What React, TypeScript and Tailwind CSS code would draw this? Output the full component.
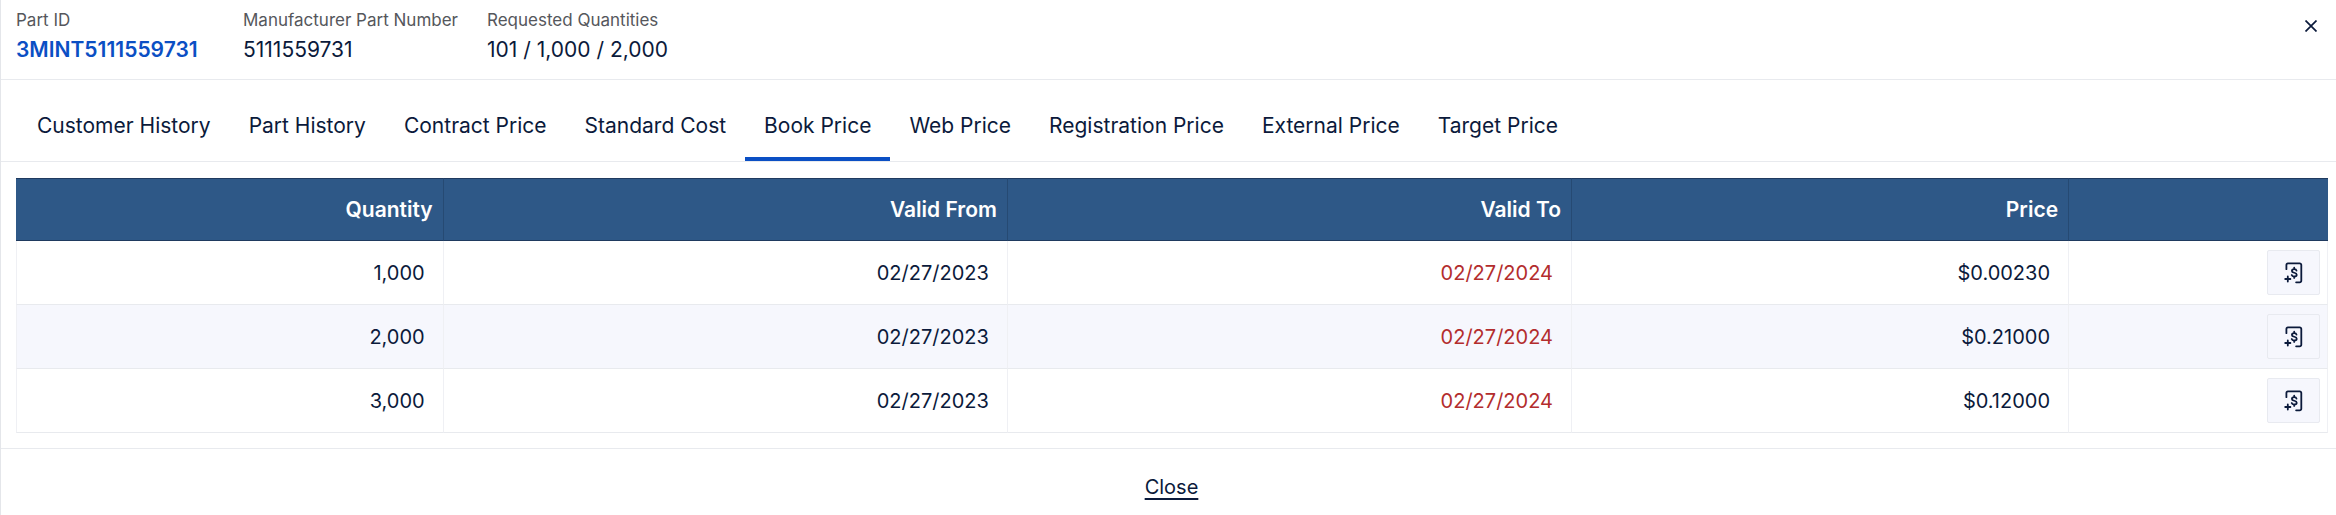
import React, { useState } from 'react';

interface PriceBreak {
  quantity: string;
  validFrom: string;
  validTo: string;
  price: string;
}

const tabs = [
  'Customer History',
  'Part History',
  'Contract Price',
  'Standard Cost',
  'Book Price',
  'Web Price',
  'Registration Price',
  'External Price',
  'Target Price',
];

const priceBreaks: PriceBreak[] = [
  { quantity: '1,000', validFrom: '02/27/2023', validTo: '02/27/2024', price: '$0.00230' },
  { quantity: '2,000', validFrom: '02/27/2023', validTo: '02/27/2024', price: '$0.21000' },
  { quantity: '3,000', validFrom: '02/27/2023', validTo: '02/27/2024', price: '$0.12000' },
];

const CloseIcon = () => (
  <svg className="h-3 w-3" viewBox="0 0 12 12" fill="none" stroke="currentColor" strokeWidth="1.7" aria-hidden="true">
    <path d="M0.5 0.5 11.5 11.5M11.5 0.5 0.5 11.5" />
  </svg>
);

const AddPriceIcon = () => (
  <svg
    className="h-6 w-6"
    viewBox="0 0 24 24"
    fill="none"
    stroke="currentColor"
    strokeWidth="1.8"
    strokeLinecap="round"
    strokeLinejoin="round"
    aria-hidden="true"
  >
    <path d="M4.4 8.2V4a1.6 1.6 0 0 1 1.6-1.6h11.7A1.6 1.6 0 0 1 19.3 4v15.7a1.6 1.6 0 0 1-1.6 1.6h-3.6" />
    <path d="M3.2 18h5.2M5.8 15.4v5.2" />
    <path d="M14.5 9.6c-.2-.9-1.1-1.4-2.2-1.4-1.4 0-2.4.7-2.4 1.7 0 2.5 4.8 1.2 4.8 3.8 0 1.1-1 1.8-2.4 1.8-1.3 0-2.3-.5-2.6-1.5M12.2 8V6.7M12.2 16.9v-1.3" />
  </svg>
);

interface FieldProps {
  label: string;
  children: React.ReactNode;
}

const Field: React.FC<FieldProps> = ({ label, children }) => (
  <div>
    <dt className="text-[17px] leading-6 text-[#55575c]">{label}</dt>
    <dd className="mt-1 text-[21px] leading-7">{children}</dd>
  </div>
);

const headCell = 'border-r border-[#264a73] pr-[10px] text-right text-[21px] font-semibold last:border-r-0';
const bodyCell = 'border-r border-[#eff0f4] pr-[18px] text-right';

export default function App() {
  const [activeTab, setActiveTab] = useState('Book Price');

  return (
    <div className="border-l border-[#e4e6ea] bg-white font-['Inter','Liberation_Sans',sans-serif] text-[#0b1a3b]">
      <header className="flex items-start justify-between border-b border-[#e8eaee] pt-2 pr-[19px] pb-[15px] pl-[15px]">
        <dl className="grid grid-cols-[198px_auto_auto] gap-x-[29px]">
          <Field label="Part ID">
            <a href="#part" className="font-semibold text-[#0b4fc4]">
              3MINT5111559731
            </a>
          </Field>
          <Field label="Manufacturer Part Number">5111559731</Field>
          <Field label="Requested Quantities">101 / 1,000 / 2,000</Field>
        </dl>
        <button type="button" aria-label="Close panel" className="mt-3">
          <CloseIcon />
        </button>
      </header>

      <nav role="tablist" className="flex border-b border-[#e8eaee] pt-[14px] pl-[17px]">
        {tabs.map((tab) => (
          <button
            key={tab}
            type="button"
            role="tab"
            aria-selected={tab === activeTab}
            onClick={() => setActiveTab(tab)}
            className={`h-[67px] border-b-4 px-[19px] text-[21px] leading-7 ${
              tab === activeTab ? 'border-[#0b4fc4]' : 'border-transparent'
            }`}
          >
            {tab}
          </button>
        ))}
      </nav>

      <main className="pt-4 pr-2 pb-[15px] pl-[15px]">
        <table className="w-full table-fixed border-separate border-spacing-0 text-[20px] leading-7">
          <colgroup>
            <col className="w-[18.5%]" />
            <col className="w-[24.4%]" />
            <col className="w-[24.4%]" />
            <col className="w-[21.5%]" />
            <col />
          </colgroup>
          <thead>
            <tr className="h-[63px] bg-[#2e5887] text-white [&>th]:border-y [&>th]:border-y-[#1f3a5f]">
              <th scope="col" className={headCell}>Quantity</th>
              <th scope="col" className={headCell}>Valid From</th>
              <th scope="col" className={headCell}>Valid To</th>
              <th scope="col" className={headCell}>Price</th>
              <th scope="col" className={headCell} aria-label="Actions" />
            </tr>
          </thead>
          <tbody>
            {priceBreaks.map((row) => (
              <tr
                key={row.quantity}
                className="h-16 even:bg-[#f6f7fd] [&>td]:border-b [&>td]:border-b-[#e8eaee] [&>td:first-child]:border-l [&>td:first-child]:border-l-[#eff0f4]"
              >
                <td className={bodyCell}>{row.quantity}</td>
                <td className={bodyCell}>{row.validFrom}</td>
                <td className={`${bodyCell} text-[#b32d2d]`}>{row.validTo}</td>
                <td className={bodyCell}>{row.price}</td>
                <td className="border-r border-[#eff0f4] pr-[7px]">
                  <button
                    type="button"
                    aria-label={`Add price for ${row.quantity}`}
                    className="ml-auto flex h-[45px] w-[53px] items-center justify-center rounded-xs border border-[#e8eaf0] bg-[#f6f7fd]"
                  >
                    <AddPriceIcon />
                  </button>
                </td>
              </tr>
            ))}
          </tbody>
        </table>
      </main>

      <footer className="flex justify-center border-t border-[#e8eaee] pt-6 pb-[14px] pl-[6px]">
        <button type="button" className="text-[20px] leading-7 underline decoration-2 underline-offset-4">
          Close
        </button>
      </footer>
    </div>
  );
}
